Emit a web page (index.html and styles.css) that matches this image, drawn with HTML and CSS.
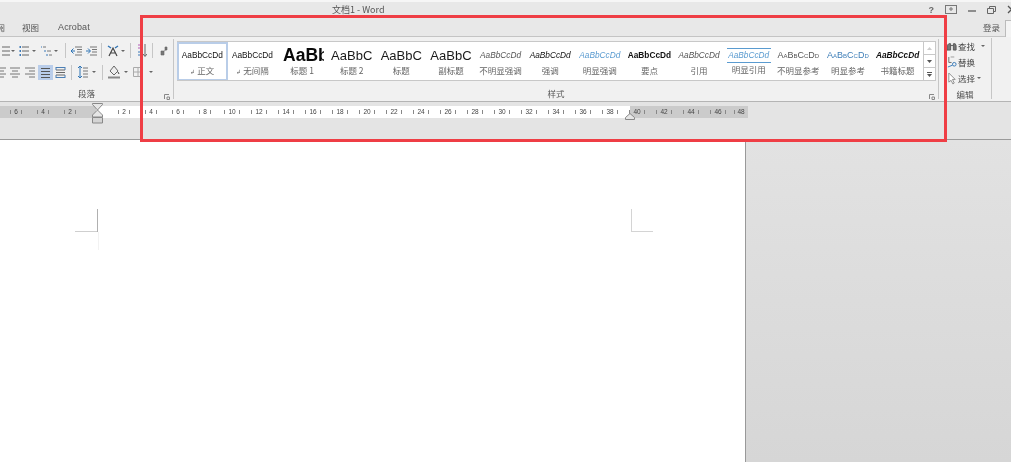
FILE: index.html
```html
<!DOCTYPE html>
<html lang="zh-CN">
<head>
<meta charset="utf-8">
<title>文档1 - Word</title>
<link rel="stylesheet" href="styles.css">
</head>
<body>
<div class="app">
  <header class="titlebar">
    <span class="doc-title">文档1 - Word</span>
    <div class="win-controls">
      <span class="help">?</span>
      <svg class="win-ic" width="12" height="10" viewBox="0 0 12 10"><rect x=".5" y=".5" width="11" height="8" fill="none" stroke="#777"/><path d="M6 2v4M4 4h4" stroke="#777"/></svg>
      <svg class="win-ic" width="8" height="10" viewBox="0 0 8 10"><path d="M0 6h8" stroke="#666" stroke-width="1.4"/></svg>
      <svg class="win-ic" width="9" height="10" viewBox="0 0 9 10"><path d="M.5 3.500h6v5h-6zM2.500 3.500v-2h6v5h-2" fill="none" stroke="#666"/></svg>
      <svg class="win-ic" width="9" height="10" viewBox="0 0 9 10"><path d="M1 1l7 7M8 1L1 8" stroke="#555" stroke-width="1.3"/></svg>
    </div>
  </header>

  <nav class="tabs">
    <span class="tab tab-clipped">审阅</span>
    <span class="tab">视图</span>
    <span class="tab tab-en">Acrobat</span>
    <span class="login">登录</span>
    <span class="avatar"></span>
  </nav>

  <section class="ribbon">
    <div class="group para">
      <div class="tool-row row-top">
        <svg class="ic first" width="12" height="14" viewBox="0 0 12 14"><path d="M4 3h8M4 7h8M4 11h8" stroke="#666"/><path d="M0 3h2M0 7h2M0 11h2" stroke="#3b79b8"/></svg>
        <i class="caret c1"></i>
        <svg class="ic g4" width="10" height="14" viewBox="0 0 10 14"><path d="M3 3h7M3 7h7M3 11h7" stroke="#666"/><path d="M0 2v2M0 6v2M0 10v2M1.500 2v2M1.500 6v2M1.500 10v2" stroke="#3b79b8"/></svg>
        <i class="caret c3"></i>
        <svg class="ic g5" width="11" height="14" viewBox="0 0 11 14"><path d="M2 3h3M6 7h4M8 11h3" stroke="#777"/><path d="M0 2v2M4 6v2M6 10v2" stroke="#3b79b8"/></svg>
        <i class="caret c2"></i>
        <i class="vsep g7"></i>
        <svg class="ic g5" width="11" height="14" viewBox="0 0 11 14"><path d="M4 3h7M6 5.500h5M6 8h5M4 11h7" stroke="#777"/><path d="M4 7H0M2.500 4.500L0 7l2.500 2.500" fill="none" stroke="#2f74b5"/></svg>
        <svg class="ic g4" width="11" height="14" viewBox="0 0 11 14"><path d="M4 3h7M6 5.500h5M6 8h5M4 11h7" stroke="#777"/><path d="M0 7h4M2 4.500L4.500 7 2 9.500" fill="none" stroke="#2f74b5"/></svg>
        <i class="vsep g4"></i>
        <svg class="ic g5" width="12" height="14" viewBox="0 0 12 14"><path d="M2 12L6 4l4 8M3.500 9h5" fill="none" stroke="#444" stroke-width="1.200"/><path d="M1 2l3 2M11 2L8 4" stroke="#2f74b5" stroke-width="1.400"/></svg>
        <i class="caret c2"></i>
        <i class="vsep g5"></i>
        <svg class="ic g6" width="10" height="15" viewBox="0 0 10 15"><path d="M1 2h4M1 5h4" stroke="#b25ab5"/><path d="M1 9h4M1 12h4" stroke="#3b79b8"/><path d="M8 1v12M6 11l2 2.500 2-2.500" fill="none" stroke="#666"/></svg>
        <i class="vsep g5"></i>
        <svg class="ic g7" width="8" height="12" viewBox="0 0 8 12"><path d="M1 6h3v4H1zM5 2h2v3H5zM4 6l3-2" fill="#777" stroke="#666" stroke-width=".6"/></svg>
      </div>
      <div class="tool-row row-bottom">
        <svg class="ic first-b" width="6" height="12" viewBox="0 0 6 12"><path d="M0 2h6M0 5h4M0 8h6M0 11h4" stroke="#777"/></svg>
        <svg class="ic g4" width="10" height="12" viewBox="0 0 10 12"><path d="M0 2h10M2 5h6M0 8h10M2 11h6" stroke="#777"/></svg>
        <svg class="ic g5" width="10" height="12" viewBox="0 0 10 12"><path d="M0 2h10M4 5h6M0 8h10M4 11h6" stroke="#777"/></svg>
        <span class="active-btn g3"><svg width="9" height="11" viewBox="0 0 9 11"><path d="M0 1.500h9M0 4.500h9M0 7.500h9M0 10.500h9" stroke="#555"/></svg></span>
        <svg class="ic g2" width="11" height="13" viewBox="0 0 11 13"><path d="M1 4h9M1 6.500h9M1 9h9" stroke="#666"/><path d="M1 1v3M10 1v3M1 1.500h9M1 12v-3M10 12V9M1 11.500h9" fill="none" stroke="#4b7fb5"/></svg>
        <i class="vsep g5"></i>
        <svg class="ic g6" width="10" height="14" viewBox="0 0 10 14"><path d="M2 1v12M0 3l2-2 2 2M0 11l2 2 2-2" fill="none" stroke="#2f74b5"/><path d="M5 3h5M5 6h5M5 9h5M5 12h5" stroke="#777"/></svg>
        <i class="caret c4"></i>
        <i class="vsep g6"></i>
        <svg class="ic g5" width="12" height="14" viewBox="0 0 12 14"><path d="M6 1L2 6l4 4 4-4z" fill="#eee" stroke="#666"/><path d="M10 7l1 2" stroke="#444"/><path d="M0 12.500h12" stroke="#888" stroke-width="2"/></svg>
        <i class="caret c4"></i>
        <svg class="ic g5" width="10" height="10" viewBox="0 0 10 10"><path d="M.5.500h9v9h-9zM5 .5v9M.5 5h9" fill="none" stroke="#aaa"/></svg>
        <i class="caret c6"></i>
      </div>
      <div class="group-foot">
        <span class="group-label">段落</span>
        <svg class="launcher" width="6" height="6" viewBox="0 0 6 6"><path d="M.5 5V.5H5M3 3h2.500v2.500H3z" fill="none" stroke="#888"/></svg>
      </div>
    </div>

    <div class="group styles">
      <div class="gallery">
        <div class="style-list">
          <div class="style-item selected"><span class="preview p-small">AaBbCcDd</span><span class="name"><em class="para-mark">↲</em> 正文</span></div>
          <div class="style-item"><span class="preview p-small">AaBbCcDd</span><span class="name"><em class="para-mark">↲</em> 无间隔</span></div>
          <div class="style-item"><span class="preview p-h1">AaBb</span><span class="name">标题 1</span></div>
          <div class="style-item"><span class="preview p-h2">AaBbC</span><span class="name">标题 2</span></div>
          <div class="style-item"><span class="preview p-h2">AaBbC</span><span class="name">标题</span></div>
          <div class="style-item"><span class="preview p-h2">AaBbC</span><span class="name">副标题</span></div>
          <div class="style-item"><span class="preview p-small p-it p-gray">AaBbCcDd</span><span class="name">不明显强调</span></div>
          <div class="style-item"><span class="preview p-small p-it">AaBbCcDd</span><span class="name">强调</span></div>
          <div class="style-item"><span class="preview p-small p-it p-blue">AaBbCcDd</span><span class="name">明显强调</span></div>
          <div class="style-item"><span class="preview p-small p-bold">AaBbCcDd</span><span class="name">要点</span></div>
          <div class="style-item"><span class="preview p-small p-it p-gray">AaBbCcDd</span><span class="name">引用</span></div>
          <div class="style-item"><span class="preview p-small p-it p-blue p-lined">AaBbCcDd</span><span class="name">明显引用</span></div>
          <div class="style-item"><span class="preview p-small p-caps p-gray">AaBbCcDd</span><span class="name">不明显参考</span></div>
          <div class="style-item"><span class="preview p-small p-caps p-blue2">AaBbCcDd</span><span class="name">明显参考</span></div>
          <div class="style-item"><span class="preview p-small p-it p-bold">AaBbCcDd</span><span class="name">书籍标题</span></div>
        </div>
        <div class="gallery-scroll">
          <span class="scroll-btn"><svg width="5" height="3" viewBox="0 0 5 3"><path d="M0 3l2.500-3L5 3z" fill="#ccc"/></svg></span>
          <span class="scroll-btn"><svg width="5" height="3" viewBox="0 0 5 3"><path d="M0 0l2.500 3L5 0z" fill="#555"/></svg></span>
          <span class="scroll-btn"><svg width="5" height="5" viewBox="0 0 5 5"><path d="M0 .5h5" stroke="#555"/><path d="M0 2l2.500 3L5 2z" fill="#555"/></svg></span>
        </div>
      </div>
      <div class="group-foot">
        <span class="group-label">样式</span>
        <svg class="launcher" width="6" height="6" viewBox="0 0 6 6"><path d="M.5 5V.5H5M3 3h2.500v2.500H3z" fill="none" stroke="#888"/></svg>
      </div>
    </div>

    <div class="group edit">
      <div class="edit-list">
        <div class="edit-row"><svg width="10" height="10" viewBox="0 0 11 11"><path d="M2 3h2v7H0V5zM7 3h2l1 2v5H7zM4 5h3" fill="#777" stroke="#555"/></svg><span>查找</span><i class="caret c5"></i></div>
        <div class="edit-row"><svg width="10" height="12" viewBox="0 0 11 13"><path d="M2 1v6h3" fill="none" stroke="#666"/><circle cx="8" cy="9" r="2" fill="none" stroke="#2f74b5"/><path d="M1 12l5-2" stroke="#2f74b5"/><path d="M4 1h4" stroke="#999"/></svg><span>替换</span></div>
        <div class="edit-row"><svg width="10" height="13" viewBox="0 0 11 14"><path d="M2 1v10l2.500-2 2 4 1.500-1-2-4h3z" fill="#fff" stroke="#888"/></svg><span>选择</span><i class="caret c2"></i></div>
      </div>
      <span class="group-label edit-label">编辑</span>
    </div>
  </section>

  <div class="ruler-band">
    <div class="ruler">
      <span class="mark">6</span><span class="mark">4</span><span class="mark">2</span><span class="mark blank"></span><span class="mark">2</span><span class="mark">4</span><span class="mark">6</span><span class="mark">8</span><span class="mark">10</span><span class="mark">12</span><span class="mark">14</span><span class="mark">16</span><span class="mark">18</span><span class="mark">20</span><span class="mark">22</span><span class="mark">24</span><span class="mark">26</span><span class="mark">28</span><span class="mark">30</span><span class="mark">32</span><span class="mark">34</span><span class="mark">36</span><span class="mark">38</span><span class="mark">40</span><span class="mark">42</span><span class="mark">44</span><span class="mark">46</span><span class="mark mark-end">48</span>
    </div>
    <svg class="indent-left" width="11" height="21" viewBox="0 0 11 21"><path d="M.5.500h10v1L5.500 7 .5 1.500zM5.500 7l5 5v2H.5v-2z" fill="#e6e6e6" stroke="#888"/><path d="M.5 14.500h10v5.500H.5z" fill="#d4d4d4" stroke="#888"/></svg>
    <svg class="indent-right" width="10" height="7" viewBox="0 0 10 7"><path d="M5 .5l4.500 4v2H.5v-2z" fill="#e6e6e6" stroke="#888"/></svg>
  </div>

  <main class="workspace">
    <div class="page">
      <i class="crop crop-lv"></i><i class="crop crop-lh"></i><i class="crop crop-lx"></i>
      <i class="crop crop-rv"></i><i class="crop crop-rh"></i>
    </div>
    <aside class="side"></aside>
  </main>

  <div class="highlight"></div>
</div>
</body>
</html>
```
FILE: styles.css
```css
* { box-sizing: border-box; }
html, body { margin: 0; padding: 0; background: #fff; }
body { font-family: "Noto Sans CJK SC", "Liberation Sans", sans-serif; color: #555; }

.app {
  position: relative;
  width: 1011px;
  height: 462px;
  overflow: hidden;
  display: flex;
  flex-direction: column;
}

/* the reference is a soft, recompressed capture */
.titlebar, .tabs, .ribbon, .ruler { filter: blur(.35px); }

/* title bar */
.titlebar {
  position: relative;
  height: 18px;
  flex: none;
  background: #e8e8e8;
  border-top: 2px solid #f6f6f6;
  display: flex;
  align-items: center;
  justify-content: flex-end;
}
.doc-title {
  position: absolute;
  left: 332px;
  top: 0;
  font: 9px/15px "Noto Sans CJK SC", "Liberation Sans", sans-serif;
  color: #555;
}
.win-controls { display: flex; align-items: center; margin-right: -5px; }
.help { font: bold 9px/12px "Liberation Sans", sans-serif; color: #666; margin-right: 11px; }
.win-ic { margin-left: 11px; }
.win-ic:nth-of-type(1) { margin-left: 0; }

/* tabs */
.tabs {
  height: 19px;
  flex: none;
  background: #e8e8e8;
  border-bottom: 1px solid #c4c4c4;
  display: flex;
  align-items: center;
  font-size: 8.500px;
  color: #555;
}
.tab { margin-right: 20px; line-height: 14px; }
.tab-clipped { margin-left: -12px; margin-right: 17px; }
.tab:nth-child(2) { margin-right: 19px; }
.tab-en { font-family: "Liberation Sans", sans-serif; font-size: 9px; letter-spacing: .1px; }
.login { margin-left: auto; margin-right: 5px; }
.avatar { width: 6px; height: 17px; margin-top: 2px; background: #f4f4f4; border: 1px solid #bbb; border-right: 0; border-bottom: 0; }

/* ribbon */
.ribbon {
  height: 65px;
  flex: none;
  display: flex;
  background: #f1f1f1;
  border-bottom: 1px solid #b4b4b4;
}
.group { position: relative; flex: none; }
.para {
  width: 174px;
  margin: 2px 0 2px;
  border-right: 1px solid #c6c6c6;
  padding-top: 4px;
}
.tool-row { display: flex; align-items: center; height: 15px; }
.row-bottom { height: 16px; margin-top: 6px; }
.ic { flex: none; display: block; }
.first { margin-left: -2px; }
.first-b { margin-left: 0; }
.g2 { margin-left: 2px; }
.g3 { margin-left: 3px; }
.g4 { margin-left: 4px; }
.g5 { margin-left: 5px; }
.g6 { margin-left: 6px; }
.g7 { margin-left: 7px; }
.caret {
  flex: none;
  width: 0;
  height: 0;
  border-left: 2px solid transparent;
  border-right: 2px solid transparent;
  border-top: 2px solid #666;
}
.c1 { margin-left: 1px; }
.c2 { margin-left: 2px; }
.c3 { margin-left: 3px; }
.c4 { margin-left: 4px; }
.c5 { margin-left: 6px; }
.c6 { margin-left: 6px; }
.vsep { flex: none; width: 1px; height: 15px; background: #c6c6c6; }
.active-btn {
  flex: none;
  width: 15px;
  height: 15px;
  background: #b9cdea;
  display: flex;
  align-items: center;
  justify-content: center;
}
.group-foot {
  position: absolute;
  left: 0;
  right: 0;
  bottom: -2px;
  height: 14px;
  text-align: center;
}
.group-label { font-size: 8.500px; line-height: 13px; color: #555; display: block; }
.launcher { position: absolute; right: 3px; bottom: 1px; }

.styles {
  width: 765px;
  margin: 2px 0;
  border-right: 1px solid #c6c6c6;
  padding: 2px 0 0 3px;
}
.gallery { display: flex; width: 759px; height: 40px; background: #fff; border: 1px solid #c8c8c8; border-left: 0; }
.style-list { flex: none; width: 746px; display: flex; overflow: hidden; }
.style-item {
  flex: 0 0 49.640px;
  height: 39px;
  display: flex;
  flex-direction: column;
  align-items: center;
  overflow: hidden;
  padding-top: 6px;
}
.style-item.selected { flex-basis: 50.640px; border: 2px solid #b9cde8; padding-top: 4px; }
.preview {
  height: 16px;
  width: 100%;
  padding: 0 2px;
  font: 8.300px/15px "Liberation Sans", sans-serif;
  color: #111;
  text-align: center;
  white-space: nowrap;
  overflow: hidden;
}
.p-h1 { font-size: 17.500px; font-weight: 700; line-height: 15px; text-align: left; padding: 0 0 0 3px; width: 44px; color: #0a0a0a; }
.p-h2 { font-size: 13px; padding: 0; color: #1a1a1a; }
.p-it { font-style: italic; }
.p-bold { font-weight: 700; }
.p-gray { color: #555; }
.p-blue { color: #5a9bd0; }
.p-blue2 { color: #3f7fb8; }
.p-caps { font-variant: small-caps; font-size: 9px; }
.p-lined { border-top: 1px solid #5a9bd0; border-bottom: 1px solid #5a9bd0; width: 44px; padding: 0; line-height: 13px; height: 15px; }
.name { font-size: 8.500px; line-height: 13px; color: #666; white-space: nowrap; }
.para-mark { font-style: normal; font-size: 6px; }
.gallery-scroll { flex: none; width: 12px; display: flex; flex-direction: column; border-left: 1px solid #c8c8c8; }
.scroll-btn {
  flex: 1;
  display: flex;
  align-items: center;
  justify-content: center;
  border-bottom: 1px solid #c8c8c8;
}
.scroll-btn:last-child { border-bottom: 0; }

.edit { width: 53px; margin: 1px 0 2px; border-right: 1px solid #c6c6c6; padding: 0 0 0 8px; }
.edit-list { display: flex; flex-direction: column; }
.edit-row { display: flex; align-items: center; height: 16px; font-size: 8.500px; color: #444; }
.edit-row svg { flex: none; }
.edit-row span { margin-left: 1px; }
.edit-label { position: absolute; left: 0; right: 0; bottom: -2px; text-align: center; }

/* ruler */
.ruler-band {
  position: relative;
  height: 38px;
  flex: none;
  padding-top: 4px;
  background: #e4e4e4;
  border-bottom: 1px solid #9a9a9a;
}
.ruler {
  width: 748px;
  height: 12px;
  padding-left: 2.500px;
  display: flex;
  overflow: hidden;
  background: linear-gradient(to right, #cbcbcb 96px, #fff 96px, #fff 630px, #cbcbcb 630px);
}
.mark {
  flex: 0 0 27px;
  display: flex;
  align-items: center;
  justify-content: center;
  gap: 3px;
  font: 6.500px/12px "Liberation Sans", sans-serif;
  color: #444;
}
.mark::before, .mark::after { content: ""; width: 1px; height: 4px; background: #888; }
.mark.blank::before, .mark.blank::after { display: none; }
.mark-end { flex-basis: 14px; justify-content: flex-start; padding-left: 2px; }
.mark-end::after { display: none; }
.indent-left { position: absolute; left: 92px; top: 1px; }
.indent-right { position: absolute; left: 625px; top: 11px; }

/* document */
.workspace { flex: 1; display: flex; min-height: 0; }
.page { position: relative; width: 746px; flex: none; background: #fff; border-right: 1px solid #999; }
.side { flex: 1; background: linear-gradient(#e2e2e2, #d6d6d6); }
.crop { position: absolute; display: block; }
.crop-lv { left: 97px; top: 69px; width: 1px; height: 23px; background: #b0b0b0; }
.crop-lh { left: 75px; top: 91px; width: 22px; height: 1px; background: #cfcfcf; }
.crop-lx { left: 98px; top: 92px; width: 1px; height: 18px; background: #f2f2f2; }
.crop-rv { left: 631px; top: 69px; width: 1px; height: 23px; background: #d4d4d4; }
.crop-rh { left: 631px; top: 91px; width: 22px; height: 1px; background: #d4d4d4; }

/* annotation drawn over the screenshot */
.highlight {
  position: absolute;
  left: 140px;
  top: 15px;
  width: 807px;
  height: 127px;
  border: 3px solid #ef3e45;
}
```
